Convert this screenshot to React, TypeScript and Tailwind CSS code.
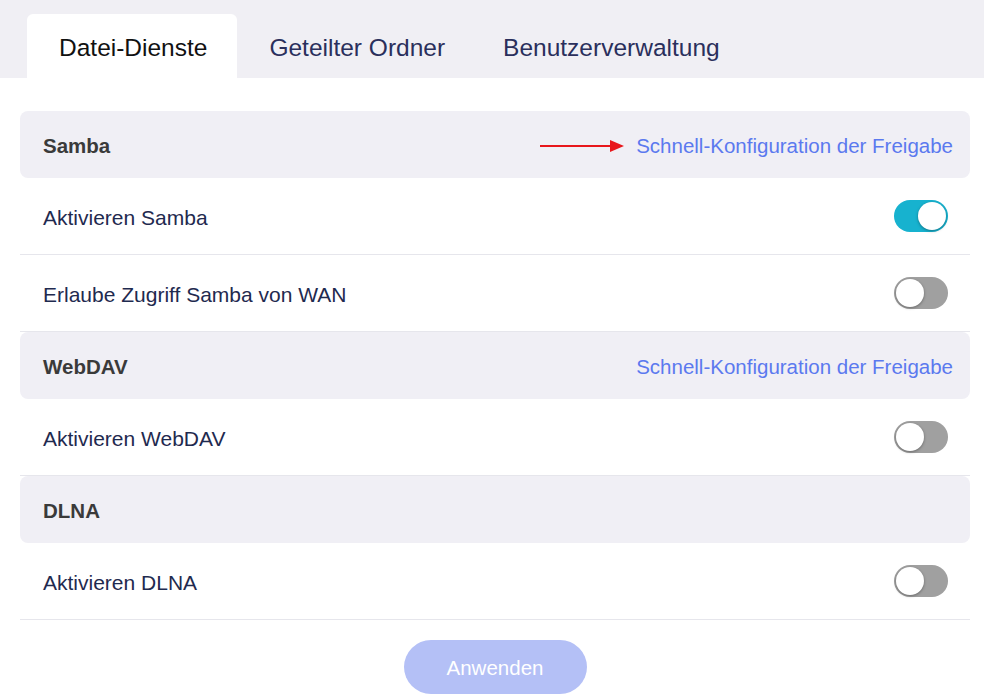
import { useState } from 'react';

function Toggle({ on, onChange }: { on: boolean; onChange: () => void }) {
  return (
    <button
      onClick={onChange}
      className={`relative h-[32px] w-[54px] rounded-full transition-colors ${
        on ? 'bg-[#17b2cf]' : 'bg-[#a0a0a0]'
      }`}
    >
      <span
        className={`absolute top-[2px] h-[28px] w-[28px] rounded-full bg-white shadow-[0_1px_3px_rgba(0,0,0,0.35)] ${
          on ? 'left-[24px]' : 'left-[2px]'
        }`}
      />
    </button>
  );
}

function SectionHeader({ title, link, arrow }: { title: string; link?: string; arrow?: boolean }) {
  return (
    <div className="flex h-[67px] items-center justify-between rounded-lg bg-[#f0eff5] pl-[23px] pr-[17px]">
      <span className="pt-[3px] text-[20.5px] font-bold text-[#3a3a3a]">{title}</span>
      {link && (
        <div className="flex items-center gap-[12px] pt-[3px]">
          {arrow && (
            <svg width="84" height="12" viewBox="0 0 84 12">
              <line x1="0" y1="6" x2="72" y2="6" stroke="#e8161b" strokeWidth="2" />
              <polygon points="70,0 84,6 70,12" fill="#e8161b" />
            </svg>
          )}
          <a className="cursor-pointer text-[20.5px] text-[#5b79ef]">{link}</a>
        </div>
      )}
    </div>
  );
}

function Row({ label, on, onChange }: { label: string; on: boolean; onChange: () => void }) {
  return (
    <div className="flex h-[77px] items-center justify-between border-b border-[#e6e6ec] pl-[23px] pr-[22px]">
      <span className="pt-[3px] text-[21px] text-[#1f2a4f]">{label}</span>
      <Toggle on={on} onChange={onChange} />
    </div>
  );
}

export default function App() {
  const [tab, setTab] = useState(0);
  const [samba, setSamba] = useState(true);
  const [wan, setWan] = useState(false);
  const [webdav, setWebdav] = useState(false);
  const [dlna, setDlna] = useState(false);

  const tabs = ['Datei-Dienste', 'Geteilter Ordner', 'Benutzerverwaltung'];

  return (
    <div className="h-[697px] w-[984px] overflow-hidden bg-white font-['Liberation_Sans',Arial,sans-serif]">
      <div className="flex h-[78px] items-end bg-[#f0eff4] pl-[27px]">
        {tabs.map((t, i) => (
          <button
            key={t}
            onClick={() => setTab(i)}
            className={`flex h-[64px] items-center rounded-t-md pl-[32px] pt-[4px] text-[24.5px] ${
              i === 0 ? 'pr-[30px]' : 'pr-[26px]'
            } ${tab === i ? 'bg-white text-[#111]' : 'text-[#2a2f5c]'}`}
          >
            {t}
          </button>
        ))}
      </div>

      <div className="pl-[20px] pr-[14px] pt-[33px]">
        <SectionHeader title="Samba" link="Schnell-Konfiguration der Freigabe" arrow />
        <Row label="Aktivieren Samba" on={samba} onChange={() => setSamba(!samba)} />
        <Row label="Erlaube Zugriff Samba von WAN" on={wan} onChange={() => setWan(!wan)} />
        <SectionHeader title="WebDAV" link="Schnell-Konfiguration der Freigabe" />
        <Row label="Aktivieren WebDAV" on={webdav} onChange={() => setWebdav(!webdav)} />
        <SectionHeader title="DLNA" />
        <Row label="Aktivieren DLNA" on={dlna} onChange={() => setDlna(!dlna)} />

        <div className="flex justify-center pt-[20px]">
          <button className="h-[54px] w-[183px] rounded-full bg-[#b4c0f6] pt-[2px] text-[20.5px] text-white">
            Anwenden
          </button>
        </div>
      </div>
    </div>
  );
}
